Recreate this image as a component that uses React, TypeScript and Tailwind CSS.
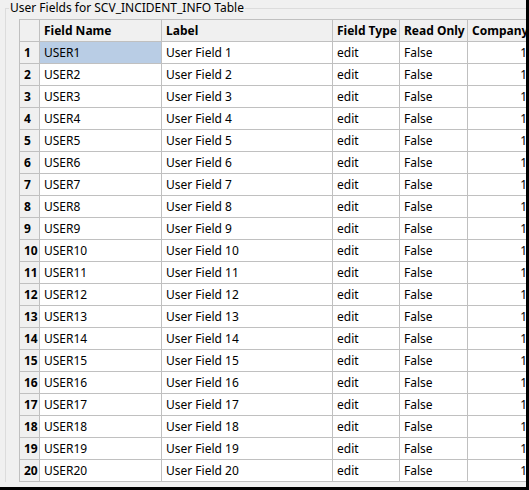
const cols = [
  { w: 'w-[20px]' },
  { w: 'w-[122px]', title: 'Field Name' },
  { w: 'w-[171px]', title: 'Label' },
  { w: 'w-[67px]', title: 'Field Type' },
  { w: 'w-[68px]', title: 'Read Only' },
  { w: 'w-[64px]', title: 'Company' },
];

const rows = Array.from({ length: 20 }, (_, i) => i + 1);

const cell = 'border border-[#c0c0c0] px-[4px] py-0 leading-[20px] whitespace-nowrap overflow-hidden';

export default function App() {
  return (
    <div className="w-[529px] h-[490px] bg-[#f0f0f0] border-r-[3px] border-b-[3px] border-black overflow-hidden font-['Liberation_Sans'] text-[12px] text-black">
      <div className="relative pt-[8px] pl-[5px]">
        <div className="border-t border-l border-[#dcdcdc] pl-[13px] pt-[10px]">
          <table className="table-fixed border-collapse bg-white w-[512px]">
            <thead>
              <tr className="h-[22px]">
                {cols.map((c, i) => (
                  <th key={i} className={`${c.w} ${cell} bg-[#f0f0f0] text-left font-bold`}>
                    {c.title}
                  </th>
                ))}
              </tr>
            </thead>
            <tbody>
              {rows.map((n) => (
                <tr key={n} className="h-[22px]">
                  <td className={`${cell} bg-[#f0f0f0] px-[3px] font-bold`}>{n}</td>
                  <td className={`${cell} ${n === 1 ? 'bg-[#b9cde5]' : ''}`}>USER{n}</td>
                  <td className={cell}>User Field {n}</td>
                  <td className={cell}>edit</td>
                  <td className={cell}>False</td>
                  <td className={`${cell} text-right`}>1</td>
                </tr>
              ))}
            </tbody>
          </table>
        </div>
        <span className="absolute left-[9px] top-0 bg-[#f0f0f0] px-[1px] leading-[15px]">User Fields for SCV_INCIDENT_INFO Table</span>
      </div>
    </div>
  );
}
